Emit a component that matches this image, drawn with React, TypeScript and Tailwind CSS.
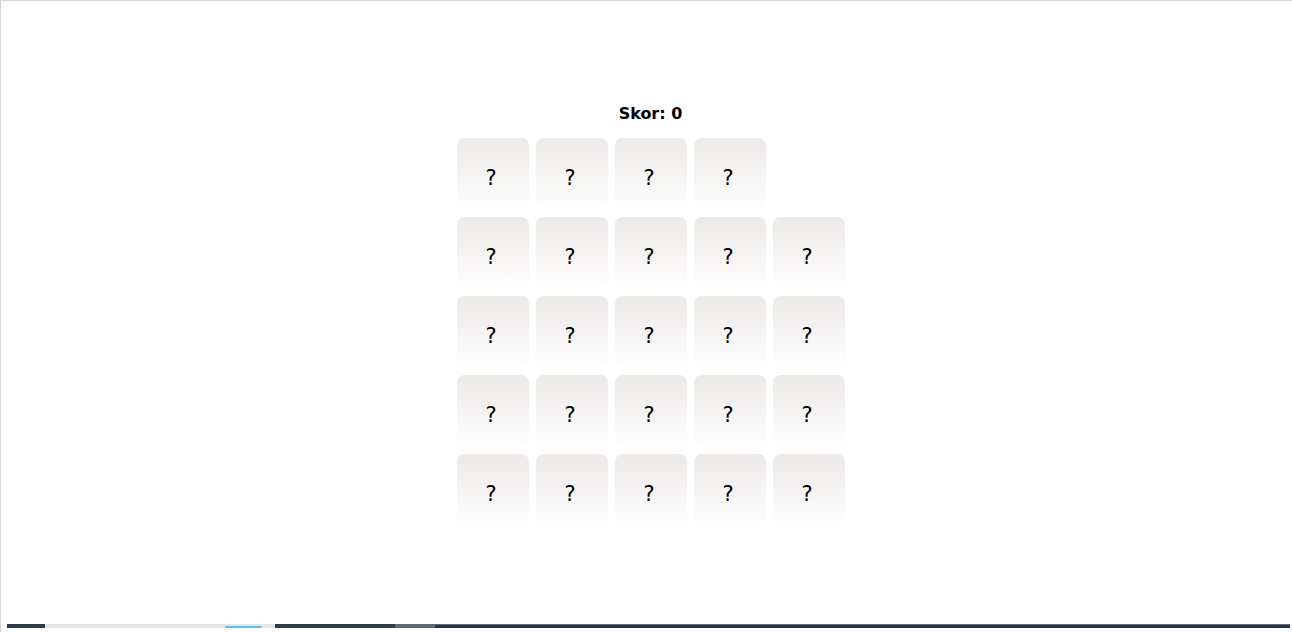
const rows = [4, 5, 5, 5, 5];

function Card() {
  return (
    <div className="w-[72px] h-[72px] rounded-[8px] bg-gradient-to-b from-[#ece9e6] to-white flex items-center justify-center pt-[9px] pr-[3px] text-[21px] text-black">
      ?
    </div>
  );
}

export default function App() {
  return (
    <div
      className="h-[632px] w-full bg-white border-l border-t border-[#d4d4d4] flex flex-col"
      style={{ fontFamily: '"Comic Sans MS", "DejaVu Sans", sans-serif' }}
    >
      <div className="flex flex-col items-center pt-[101px] pl-[8px]">
        <h1 className="text-[16px] leading-6 font-bold text-black">Skor: 0</h1>
        <div className="mt-[12px] flex flex-col gap-[7px]">
          {rows.map((count, r) => (
            <div key={r} className="flex gap-[7px]">
              {Array.from({ length: 5 }).map((_, c) =>
                c < count ? <Card key={c} /> : <div key={c} className="w-[72px] h-[72px]" />
              )}
            </div>
          ))}
        </div>
      </div>

      <div className="flex-1" />

      {/* taskbar strip */}
      <div className="mb-[4px] ml-[6px] mr-[2px] h-[4px] flex">
        <div className="w-[38px] bg-[#2b3d48]" />
        <div className="w-[230px] bg-[#e6e6e6] flex items-end">
          <div className="ml-[180px] w-[37px] h-[2px] rounded-t-full bg-[#4fc3f7]" />
        </div>
        <div className="w-[120px] bg-[#2b3d48]" />
        <div className="w-[40px] bg-[#5a6b75]" />
        <div className="flex-1 bg-[#22334a] border-t border-[#5d6d78]" />
      </div>
    </div>
  );
}
